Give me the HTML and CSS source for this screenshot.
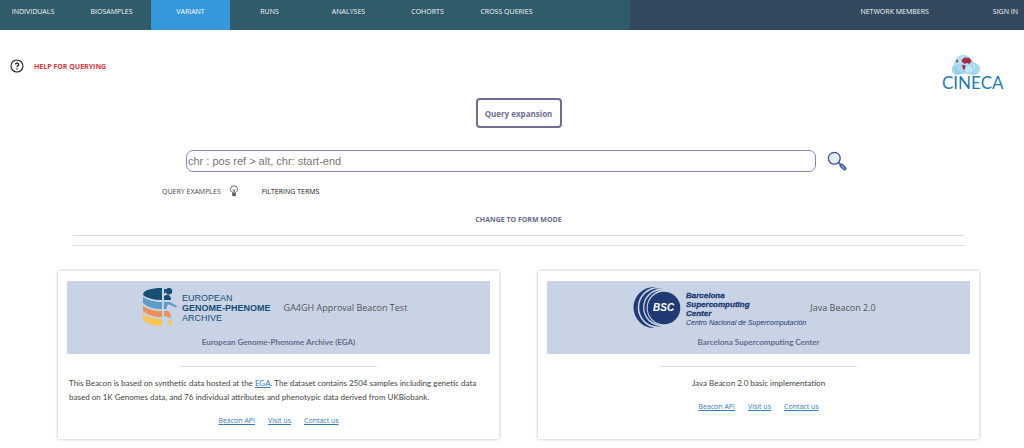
FILE: index.html
```html
<!DOCTYPE html>
<html lang="en">
<head>
<meta charset="utf-8">
<meta name="viewport" content="width=device-width, initial-scale=1">
<title>Beacon Network</title>
<link rel="stylesheet" href="styles.css">
</head>
<body>
<nav class="nav">
  <div class="nav-main">
    <a href="#">INDIVIDUALS</a>
    <a href="#">BIOSAMPLES</a>
    <a href="#" class="active">VARIANT</a>
    <a href="#">RUNS</a>
    <a href="#">ANALYSES</a>
    <a href="#">COHORTS</a>
    <a href="#">CROSS QUERIES</a>
  </div>
  <div class="nav-side">
    <a href="#">NETWORK MEMBERS</a>
    <a href="#">SIGN IN</a>
  </div>
</nav>

<div class="topbar">
  <a class="help" href="#">
    <svg class="help-icon" viewBox="0 0 14 14" aria-hidden="true">
      <circle cx="7" cy="7" r="6" fill="none" stroke="#222" stroke-width="1.1"/>
      <path d="M5.500 5.500C5.500 3.600 8.600 3.700 8.600 5.500C8.600 6.700 7 6.700 7 8.100M7 9.300V10.500" fill="none" stroke="#222" stroke-width="1.400"/>
    </svg>
    HELP FOR QUERYING
  </a>
  <a class="cineca" href="#" aria-label="CINECA">
    <svg class="cineca-logo" viewBox="0 0 64 38">
      <g stroke="#7fc4e6" stroke-width=".7">
        <circle cx="32" cy="15" r="5.500" fill="#a9dcf2"/>
        <circle cx="28" cy="13" r="6" fill="#c2e7f6"/>
        <circle cx="15" cy="15.500" r="4.800" fill="#a5d9f1"/>
        <circle cx="21.500" cy="10.500" r="9" fill="#b9e2f4"/>
        <circle cx="17.500" cy="15.500" r="4.500" fill="#8dcdec" fill-opacity=".5"/>
        <circle cx="27" cy="15.500" r="4.500" fill="#c9ebf8" fill-opacity=".5"/>
      </g>
      <path d="M19.500 6L22.500 3.500L27.500 4L29.500 7L27.500 10L24.500 9L23 10L20 8ZM20.500 10.500L23.500 11.500L23 15L21.500 16L20.500 13ZM14 7L15.500 5.500L16.500 7L15 9Z" fill="#a62c49"/>
      <text x="0" y="34.500" class="cineca-text">CINECA</text>
    </svg>
  </a>
</div>

<main class="main">
  <button class="expand" type="button">Query expansion</button>

  <form class="search">
    <input class="search-input" type="text" aria-label="Variant query" placeholder="chr : pos ref &gt; alt, chr: start-end">
    <button class="search-button" type="button" aria-label="Search">
      <svg viewBox="0 0 20 20" aria-hidden="true">
        <path d="M11.500 11.500L15 15" stroke="#4a4a94" stroke-width="1.600"/>
        <path d="M14.500 14.500L17.500 17.400" stroke="#3c4395" stroke-width="4" stroke-linecap="round"/>
        <path d="M14.700 14.600L17.300 17.200" stroke="#62a5d5" stroke-width="2" stroke-linecap="round"/>
        <circle cx="7.300" cy="7.300" r="5.900" fill="#dbf2f8" stroke="#4b4b9b" stroke-width="1.300"/>
      </svg>
    </button>
  </form>

  <div class="tools">
    <button class="tool examples" type="button">QUERY EXAMPLES
      <svg class="bulb" viewBox="0 0 10 12" aria-hidden="true">
        <path d="M3.500 8V7.400C2.200 6.800 1.400 5.800 1.400 4.400A3.600 3.600 0 0 1 8.600 4.400C8.600 5.800 7.800 6.800 6.500 7.400V8" fill="none" stroke="#444" stroke-width=".8"/>
        <path d="M4.300 8V5.400L3.700 4.200M5.700 8V5.400L6.300 4.200M4.300 5.400H5.700" fill="none" stroke="#444" stroke-width=".6"/>
        <path d="M3.300 8H6.700V10.300L5.900 11.300H4.100L3.300 10.300Z" fill="#555"/>
      </svg>
    </button>
    <button class="tool terms" type="button">FILTERING TERMS</button>
  </div>

  <button class="mode" type="button">CHANGE TO FORM MODE</button>
  <hr class="rule">
  <hr class="rule">

  <div class="cards">
    <article class="card">
      <header class="card-head">
        <div class="brand">
          <svg class="logo-ega" viewBox="0 0 134 42" role="img" aria-label="European Genome-Phenome Archive">
            <path d="M20 2V14Q7 14 1 9C1 4 9 2 20 2Z" fill="#174e73"/>
            <path d="M1 11Q8 16 20 16V23Q7 23 1 17Z" fill="#5c9cc6"/>
            <path d="M1 20Q8 25 20 25V31Q7 31 1 25Z" fill="#ed9256"/>
            <path d="M1 28Q8 33 20 33V40Q7 40 1 34Z" fill="#f8c650"/>
            <circle cx="27" cy="5.200" r="3.200" fill="#174e73"/>
            <path d="M22 3V8L24 6V3ZM22 10L25 8.500Q29 9 29 14H22Z" fill="#174e73"/>
            <path d="M22 16H28L35 20L34 21.500L27 18.500Q25 18 24.500 23H22Z" fill="#5c9cc6"/>
            <path d="M22 25H26Q29 27 29 31.500H26L24 30H22Z" fill="#ed9256"/>
            <path d="M26 34H29L30 39L27 40Z" fill="#f8c650"/>
            <g class="ega-text">
              <text x="40" y="15">EUROPEAN</text>
              <text x="40" y="25" class="strong">GENOME-PHENOME</text>
              <text x="40" y="35">ARCHIVE</text>
            </g>
          </svg>
          <h2 class="card-title">GA4GH Approval Beacon Test</h2>
        </div>
        <p class="org">European Genome-Phenome Archive (EGA)</p>
      </header>
      <hr class="short-rule">
      <p class="desc">This Beacon is based on synthetic data hosted at the <a href="#">EGA</a>. The dataset contains 2504 samples including genetic data based on 1K Genomes data, and 76 individual attributes and phenotypic data derived from UKBiobank.</p>
      <div class="links"><a href="#">Beacon API</a><a href="#">Visit us</a><a href="#">Contact us</a></div>
    </article>

    <article class="card">
      <header class="card-head">
        <div class="brand">
          <svg class="logo-bsc" viewBox="0 0 169 42" role="img" aria-label="Barcelona Supercomputing Center">
            <circle cx="21" cy="21.500" r="20.500" fill="#203a75"/>
            <circle cx="25.500" cy="21.500" r="20.800" fill="#c8d3e6"/>
            <circle cx="25.200" cy="21.500" r="19" fill="#203a75"/>
            <circle cx="29" cy="21.500" r="19" fill="#c8d3e6"/>
            <circle cx="28.300" cy="21.500" r="17" fill="#203a75"/>
            <circle cx="31.500" cy="21.800" r="17.900" fill="#c8d3e6"/>
            <circle cx="31" cy="22" r="16.300" fill="#203a75"/>
            <text x="20" y="25" class="bsc-mark">BSC</text>
            <g class="bsc-name">
              <text x="53" y="12">Barcelona</text>
              <text x="53" y="21">Supercomputing</text>
              <text x="53" y="30">Center</text>
            </g>
            <text x="53" y="39" class="bsc-sub">Centro Nacional de Supercomputación</text>
          </svg>
          <h2 class="card-title">Java Beacon 2.0</h2>
        </div>
        <p class="org">Barcelona Supercomputing Center</p>
      </header>
      <hr class="short-rule">
      <p class="desc centered">Java Beacon 2.0 basic implementation</p>
      <div class="links"><a href="#">Beacon API</a><a href="#">Visit us</a><a href="#">Contact us</a></div>
    </article>
  </div>
</main>
</body>
</html>
```
FILE: styles.css
```css
* { box-sizing: border-box; }

body {
  margin: 0;
  background: #fff;
  color: #555;
  font-family: "Open Sans", "Noto Sans", sans-serif;
  font-size: 7px;
}

button { font-family: inherit; cursor: pointer; background: none; border: 0; padding: 0; }
h2, p { margin: 0; font-weight: normal; }
svg { display: block; overflow: visible; }

.nav { display: flex; background: #34495e; height: 30px; line-height: 24px; }
.nav a { color: #f4f8fa; text-decoration: none; }
.nav-main {
  display: flex;
  width: 61.5%;
  background: #305b69;
  border-bottom-right-radius: 4px;
}
.nav-main a { width: 79px; text-align: center; white-space: nowrap; }
.nav-main a:first-child { width: 72px; padding-right: 6px; }
.nav-main .active { background: #3498db; color: #fff; }
.nav-side {
  flex: 1;
  display: flex;
  justify-content: flex-end;
  gap: 64px;
  padding-right: 6px;
}

.topbar {
  display: flex;
  justify-content: space-between;
  align-items: flex-start;
  height: 68px;
  padding: 24px 18px 0 10px;
}
.help {
  display: flex;
  align-items: center;
  gap: 10px;
  height: 24px;
  color: #d8363d;
  font-weight: bold;
  text-decoration: none;
}
.help-icon { width: 14px; height: 14px; }
.cineca-logo { width: 64px; height: 38px; }
.cineca-text { font: 17px Lato, sans-serif; fill: #2679b8; }

.main {
  display: flex;
  flex-direction: column;
  align-items: center;
  padding: 0 45px 8px 58px;
}
.expand {
  width: 86px;
  height: 30px;
  border: 2px solid #6d6d93;
  border-radius: 4px;
  color: #6d6d93;
  font-size: 8px;
  font-weight: bold;
}
.search {
  display: flex;
  gap: 11px;
  align-self: stretch;
  margin: 22px 132px 0 128px;
}
.search-input {
  flex: 1;
  min-width: 0;
  height: 22px;
  padding: 0 1px;
  border: 1px solid #8a7fca;
  border-radius: 7px;
  font: 11px "Liberation Sans", Arial, sans-serif;
}
.search-input::placeholder { color: #757575; }
.search-button { width: 20px; height: 22px; }

.tools {
  display: flex;
  align-self: stretch;
  align-items: center;
  gap: 23px;
  height: 14px;
  margin: 12px 0 0 104px;
}
.tool { display: flex; align-items: center; gap: 8px; font-size: 7px; }
.examples { color: #444; }
.terms { color: #111; }
.bulb { width: 10px; height: 12px; }

.mode {
  height: 12px;
  margin-top: 15px;
  color: #666b8c;
  font-size: 7px;
  font-weight: bold;
}
.rule {
  width: calc(100% - 29px);
  margin: 10px 0 0;
  border: 0;
  border-top: 1px solid #dedede;
}
.rule + .rule { margin-top: 9px; }

.cards {
  display: grid;
  grid-template-columns: 1fr 1fr;
  gap: 39px;
  align-self: stretch;
  margin-top: 25px;
}
.card {
  min-height: 168px;
  padding: 10px 9px;
  box-shadow: 0 0 3px rgba(0, 0, 0, 0.3);
}
.card-head {
  height: 73px;
  padding-top: 5px;
  background: #c8d3e6;
  border-radius: 1px;
  text-align: center;
}
.brand {
  display: flex;
  justify-content: center;
  align-items: center;
  gap: 8px;
  height: 42px;
  padding-right: 8px;
}
.logo-ega { width: 134px; height: 42px; }
.logo-bsc { width: 169px; height: 42px; }
.ega-text { font-family: "Liberation Sans", Arial, sans-serif; font-size: 9px; fill: #174e73; }
.ega-text .strong { font-weight: bold; }
.bsc-mark { font: italic bold 10px "Liberation Sans", Arial, sans-serif; fill: #fff; }
.bsc-name { font: italic bold 8px "Liberation Sans", Arial, sans-serif; fill: #203a75; stroke: #203a75; stroke-width: 0.3px; }
.bsc-sub { font: italic 7px "Liberation Sans", Arial, sans-serif; fill: #203a75; }
.card-title { color: #555; font-size: 9px; }
.org {
  margin-top: 8px;
  color: #646b8a;
  font: bold 8px/12px Lato, sans-serif;
}
.short-rule {
  width: 197px;
  margin: 12px auto 0;
  border: 0;
  border-top: 1px solid #dedede;
}
.desc {
  margin: 9px 2px 0;
  color: #444;
  font: 8px/14px Lato, sans-serif;
}
.centered { text-align: center; }
.links { display: flex; justify-content: center; gap: 13px; margin-top: 10px; line-height: 14px; }
.card a { color: #337ab7; text-decoration: underline; }
```
